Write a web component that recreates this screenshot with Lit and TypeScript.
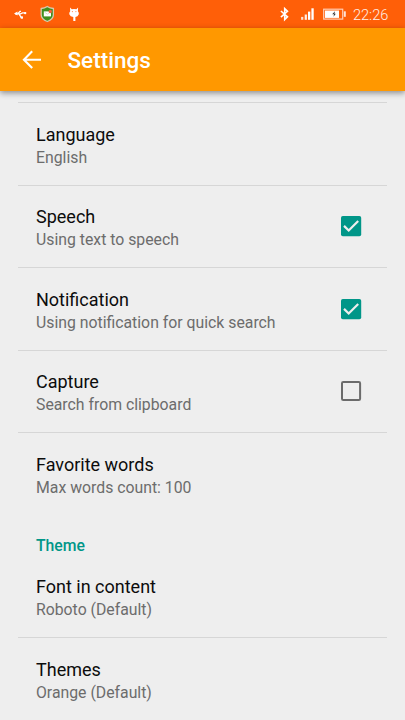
import { LitElement, html, css, svg, nothing } from "lit";
import { customElement, property } from "lit/decorators.js";

@customElement("status-bar")
class StatusBar extends LitElement {
  static styles = css`
    :host {
      display: flex;
      height: 28px;
      flex: none;
      background: #ff5f08;
      color: #ffe3d2;
    }
    svg {
      display: block;
      width: 100%;
      height: 28px;
    }
    text {
      font: 300 14.6px Roboto, sans-serif;
      fill: #fff0e8;
    }
  `;

  render() {
    return html`
      <svg viewBox="0 0 405 28">
        <g stroke="#fff" stroke-width="1.3" fill="none">
          <path d="M15 13.8H20.5L22.6 12.9H26M17.8 13.8L20 11.4H21M19 13.8L21.2 17.6H22.4" />
        </g>
        <path d="M14 13.6L17.5 11.6V15.6Z" fill="#fff" />
        <circle cx="25.2" cy="13.1" r="1.2" fill="#fff" />
        <rect x="20.8" y="16.4" width="2.2" height="2.2" fill="#fff" />

        <path
          d="M47.3 6.5C45.4 7.8 43.2 8.4 41.2 8.5V14.7C41.2 18 43.6 20 47.3 21.5C51 20 53.4 18 53.4 14.7V8.5C51.3 8.4 49.2 7.8 47.3 6.5Z"
          fill="#3f8f1f"
          stroke="#d8c8ad"
          stroke-width="1.3"
        />
        <rect x="43.8" y="11.4" width="7.2" height="5" fill="#fff" />
        <path d="M44.4 12L47.4 14.2L50.4 12" fill="none" stroke="#b5d3aa" stroke-width=".6" />
        <circle cx="50.3" cy="11.5" r="1.7" fill="#f0623b" />

        <path
          d="M70 7.4L71.8 9.3Q74 8.6 76.4 9.3L78.1 7.4L77.9 11.2Q79.2 12.6 78.8 14.3Q77.9 16.8 75.4 17V20.9H73.3V17Q70.2 16.8 69.3 14.3Q68.9 12.6 70.2 11.2Z"
          fill="#fff"
        />
        <circle cx="72.4" cy="11.6" r=".6" fill="#ff8a50" />
        <circle cx="75.9" cy="11.6" r=".6" fill="#ff8a50" />

        <path
          d="M280.9 11L287.5 16.8L284.7 19.6V8.6L287.5 11.3L280.9 17.2"
          fill="none"
          stroke="#fff"
          stroke-width="1.6"
        />
        <g fill="#fff">
          <rect x="301.1" y="16.9" width="2.2" height="2.9" opacity=".8" />
          <rect x="304.7" y="14.5" width="2.2" height="5.3" opacity=".9" />
          <rect x="308" y="11.6" width="2.3" height="8.2" />
          <rect x="311.4" y="8.3" width="2.3" height="11.5" />
        </g>
        <rect x="323.7" y="9.2" width="19" height="9.9" fill="none" stroke="#ffcdb5" stroke-width="1.2" />
        <rect x="325" y="10.5" width="14" height="7.4" fill="#fff" />
        <rect x="343.8" y="11.3" width="2" height="5.5" fill="#ffe3d5" />
        <path d="M335 11.2L332.2 14.3H334L333.5 16.8L335.8 13.8H334.4Z" fill="#333" />
        <text x="353" y="19.8" textLength="35.3">22:26</text>
      </svg>
    `;
  }
}

@customElement("app-header")
class AppHeader extends LitElement {
  static styles = css`
    :host {
      display: flex;
      align-items: center;
      flex: none;
      height: 63px;
      box-sizing: border-box;
      padding: 1px 22px 0;
      gap: 25.5px;
      background: #ff9800;
      color: #fff;
      box-shadow: 0 2px 6px rgba(0, 0, 0, 0.42);
      position: relative;
    }
    svg {
      width: 20px;
      height: 20px;
      display: block;
    }
    .heading {
      font: 500 22.5px/28px Roboto, sans-serif;
    }
  `;

  render() {
    return html`
      <svg viewBox="0 0 20 20">
        <path d="M10.2 1.3L1.9 9.7L10.2 18.1M2 9.7H19" fill="none" stroke="#fff" stroke-width="2.1" />
      </svg>
      <div class="heading">Settings</div>
    `;
  }
}

@customElement("check-mark")
class CheckMark extends LitElement {
  @property({ type: Boolean }) on = false;

  static styles = css`
    :host {
      display: block;
      width: 20px;
      height: 20px;
    }
    svg {
      display: block;
      overflow: visible;
    }
  `;

  render() {
    return html`
      <svg width="20" height="20" viewBox="0 0 20 20">
        ${this.on
          ? svg`<rect width="20.2" height="20.2" rx="1.8" fill="#009688"/>
                <path d="M3 9.9L7.7 14.5L17.2 5" fill="none" stroke="#eee" stroke-width="2.2"/>`
          : svg`<rect x="1" y="1" width="18.1" height="18.1" rx="1.3" fill="none" stroke="#6b6b6b" stroke-width="2"/>`}
      </svg>
    `;
  }
}

@customElement("setting-row")
class SettingRow extends LitElement {
  @property() label = "";
  @property() summary = "";
  @property({ attribute: false }) checked?: boolean;

  static styles = css`
    :host {
      display: flex;
      justify-content: space-between;
      box-sizing: border-box;
      height: 82.5px;
      padding: 19.5px 26px 0 18px;
      font-family: Roboto, sans-serif;
      border-top: 1px solid #d6d6d6;
    }
    :host([plain]) {
      border-top: 0;
      height: 76px;
      padding-top: 14px;
    }
    .label {
      font-size: 18px;
      line-height: 23px;
      color: #0c0c0c;
    }
    .summary {
      font-size: 15.8px;
      line-height: 23px;
      color: #6c6c6c;
    }
    check-mark {
      margin-top: 11.2px;
    }
  `;

  render() {
    return html`
      <div>
        <div class="label">${this.label}</div>
        <div class="summary">${this.summary}</div>
      </div>
      ${this.checked === undefined ? nothing : html`<check-mark ?on=${this.checked}></check-mark>`}
    `;
  }
}

@customElement("app-root")
class AppRoot extends LitElement {
  static styles = css`
    :host {
      display: flex;
      flex-direction: column;
      height: 720px;
      overflow: hidden;
      background: #eee;
    }
    .list {
      padding: 11.2px 18px 0;
    }
    .section {
      padding: 19.2px 18px 0;
      height: 27.2px;
      font: 500 15.75px/23px Roboto, sans-serif;
      color: #009688;
    }
  `;

  render() {
    return html`
      <status-bar></status-bar>
      <app-header></app-header>
      <div class="list">
        <setting-row label="Language" summary="English"></setting-row>
        <setting-row label="Speech" summary="Using text to speech" .checked=${true}></setting-row>
        <setting-row label="Notification" summary="Using notification for quick search" .checked=${true}></setting-row>
        <setting-row label="Capture" summary="Search from clipboard" .checked=${false}></setting-row>
        <setting-row label="Favorite words" summary="Max words count: 100"></setting-row>
        <div class="section">Theme</div>
        <setting-row plain label="Font in content" summary="Roboto (Default)"></setting-row>
        <setting-row label="Themes" summary="Orange (Default)"></setting-row>
      </div>
    `;
  }
}
